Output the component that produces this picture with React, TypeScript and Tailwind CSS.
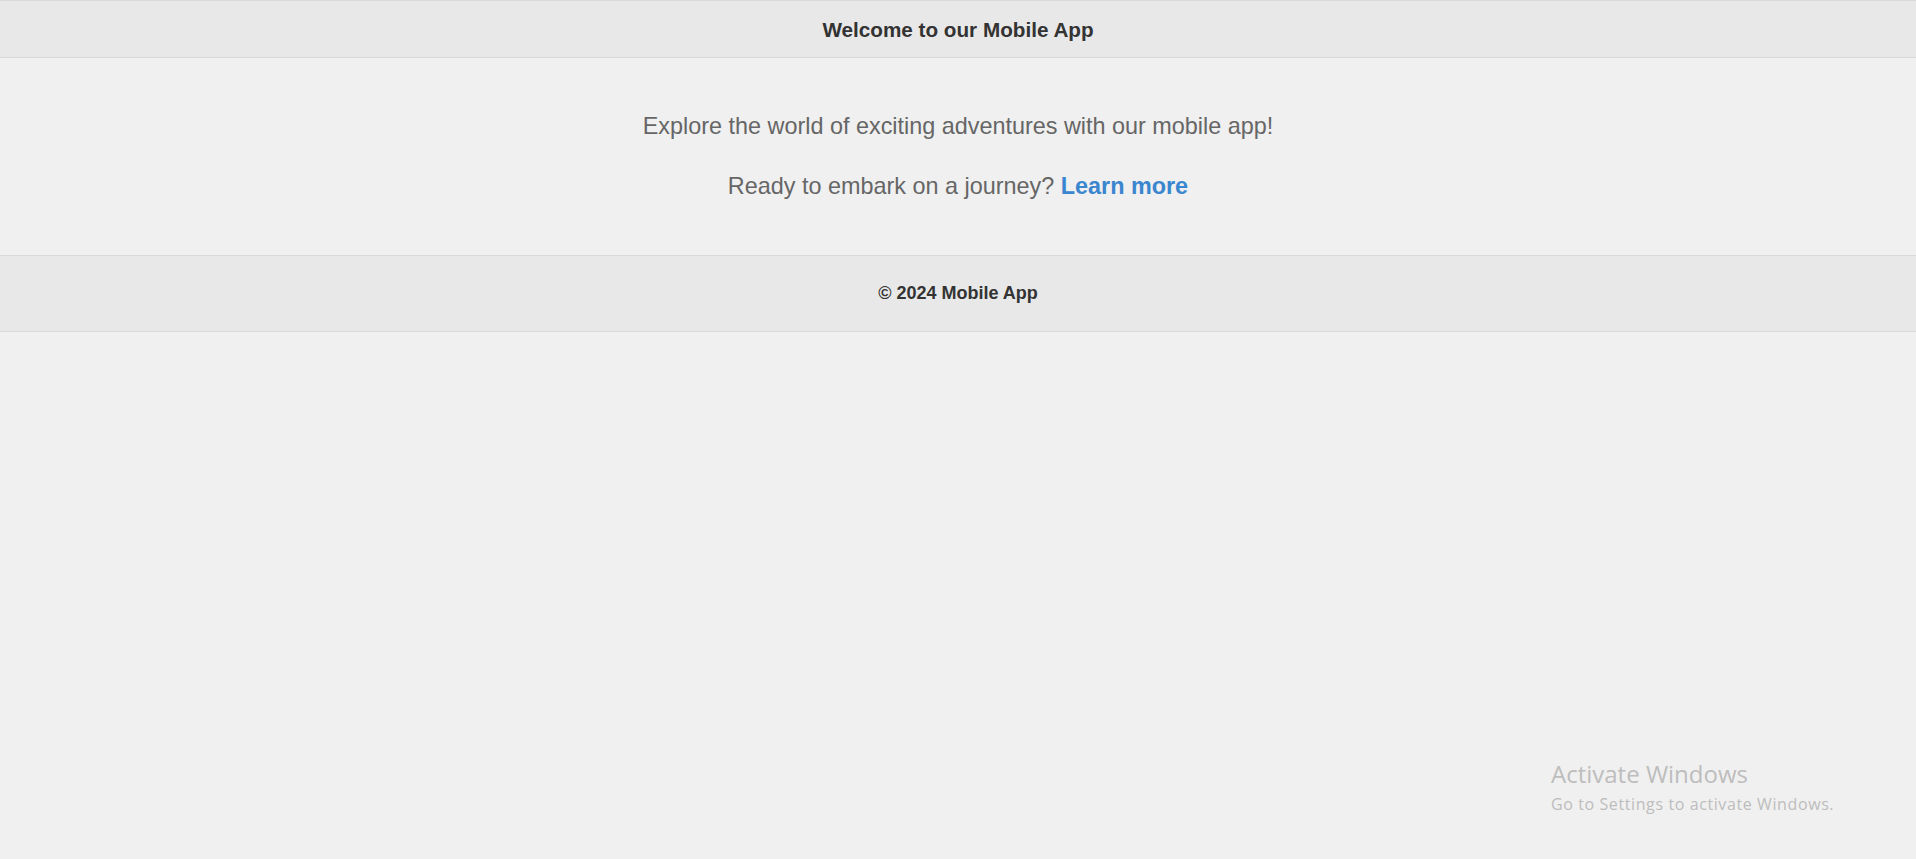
export default function App() {
  return (
    <div className="relative min-h-[859px] w-full bg-[#f0f0f0] font-['Liberation_Sans',Arial,sans-serif]">
      <header className="flex h-[58px] items-center justify-center border-y border-[#d9d9d9] bg-[#e8e8e8] pt-[2px]">
        <h1 className="text-[20.7px] font-bold text-[#333]">Welcome to our Mobile App</h1>
      </header>

      <main className="flex h-[197px] flex-col items-center gap-[33px] pt-[55px] text-[23.4px] leading-[27px] text-[#666]">
        <p>Explore the world of exciting adventures with our mobile app!</p>
        <p>
          Ready to embark on a journey?{" "}
          <a href="#" className="font-bold text-[#3a86cf]">
            Learn more
          </a>
        </p>
      </main>

      <footer className="flex h-[77px] items-center justify-center border-y border-[#d9d9d9] bg-[#e8e8e8]">
        <p className="text-[18px] font-bold text-[#333]">© 2024 Mobile App</p>
      </footer>

      {/* OS watermark overlay */}
      <div className="pointer-events-none absolute left-[1551px] top-[758px] font-['Open_Sans',sans-serif] text-[#bdbdbd]">
        <div className="text-[24px] leading-[31px]">Activate Windows</div>
        <div className="mt-[3px] text-[16px] leading-[24px] tracking-[0.6px]">Go to Settings to activate Windows.</div>
      </div>
    </div>
  );
}
